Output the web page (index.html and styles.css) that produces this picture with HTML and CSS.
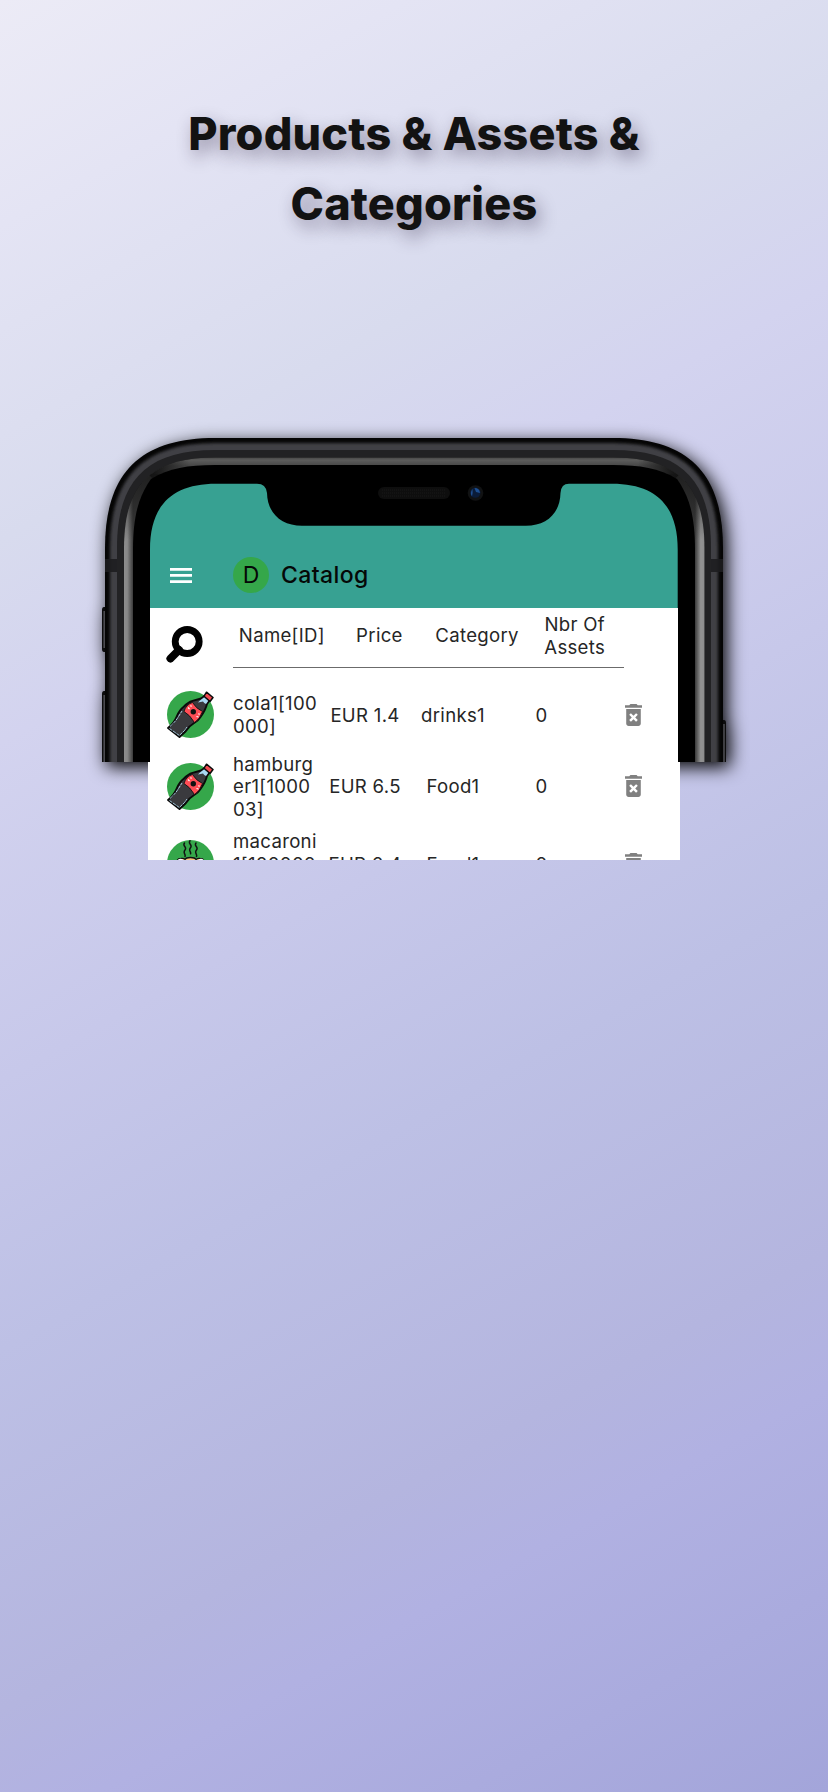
FILE: index.html
```html
<!DOCTYPE html>
<html lang="en">
<head>
<meta charset="utf-8">
<title>Products &amp; Assets &amp; Categories</title>
<link rel="stylesheet" href="styles.css">
</head>
<body>
<svg class="defs" width="0" height="0" aria-hidden="true">
  <symbol id="cola" viewBox="0 0 47 47" overflow="visible">
    <circle cx="23.5" cy="23.5" r="23.5" fill="#35a74a"/>
    <path d="M1 37Q7 32 9.700 25.500T17 15.500Q21 11 25.500 9.800T34 7.500L37.500 5L42.500 9.500L40 13Q38.500 19 33.500 26Q31 30 26.500 32.500T18.500 40.500L12.500 46Z" fill="#3a3a3e" stroke="#0a0a0a" stroke-width="1.900" stroke-linejoin="round"/>
    <path d="M33 9.500L37.500 6L41.500 9.500L39 13Q37 12 36 10.500L31 11.500Z" fill="#a9d9f3"/>
    <path d="M39.500 1.200L46 6.500L43 10.500L37 5.200Z" fill="#f2494f" stroke="#0a0a0a" stroke-width="1.500" stroke-linejoin="round"/>
    <path d="M17 20.500Q19 13.500 25.500 11.500Q29 17.500 35.500 20.500Q33 28 27.500 31.500Q23 24 17 20.500Z" fill="#ff4d55" stroke="#0a0a0a" stroke-width=".8"/>
    <circle cx="26.300" cy="20.800" r="2.700" fill="#111"/>
    <path d="M21 16.500l1.500 1.500M29.500 25.500l2 .5M23.500 14.500l1 1M31.500 22.500l1 1" stroke="#fff" stroke-width="1.100"/>
    <path d="M2.500 37.500L12.300 44.500L17.500 39.500L20 36M3 35.500Q9 30 11.500 25.500L15 20" fill="none" stroke="#b7dff5" stroke-width=".9" stroke-dasharray="3.500 .8"/>
  </symbol>
  <symbol id="pasta" viewBox="0 0 47 47">
    <circle cx="23.500" cy="23.500" r="23.500" fill="#35a74a"/>
    <path d="M17.500 3c-2.500 3 3 4 .5 7c-2.500 3 1 4 0 6.500M23 .8c-2.500 3 3 4 .5 7c-2.500 3 1 4 0 6M29 3c-2.500 3 3 4 .5 7c-2.500 3 1 4 0 6.500" fill="none" stroke="#111" stroke-width="1.500" stroke-linecap="round"/>
    <path d="M10 22q0-3.500 4-3.500q3-.5 4 1q1-2 5.500-2t5.500 2q2-1.500 4-1q4 0 4 3.500v8H10z" fill="#fbc57c" stroke="#111" stroke-width="1.300"/>
    <path d="M11.500 20.500q2-1.500 4 0M32 20.500q2-1.500 4 0" fill="none" stroke="#fff" stroke-width="1.800"/>
  </symbol>
  <symbol id="trash" viewBox="5 3 14 18">
    <path fill="#808080" fill-rule="evenodd" d="M6 19c0 1.100.9 2 2 2h8c1.100 0 2-.9 2-2V7H6v12zm2.460-7.120l1.410-1.410L12 12.590l2.120-2.120 1.410 1.410L13.410 14l2.120 2.120-1.410 1.410L12 15.410l-2.120 2.120-1.410-1.410L10.590 14l-2.130-2.120zM15.500 4l-1-1h-5l-1 1H5v2h14V4z"/>
  </symbol>
</svg>

<main class="page">
  <h1 class="headline">Products &amp; Assets &amp;<br>Categories</h1>

  <section class="phone">
    <svg class="frame" viewBox="80 410 670 400" width="670" height="400" aria-hidden="true">
      <defs>
        <clipPath id="cut"><rect x="80" y="410" width="670" height="352"/></clipPath>
        <filter id="soft" x="-5%" y="-5%" width="110%" height="110%"><feGaussianBlur stdDeviation="1.600"/></filter>
        <linearGradient id="topShine" x1="0" y1="457" x2="0" y2="466" gradientUnits="userSpaceOnUse">
          <stop offset="0" stop-color="#444"/><stop offset=".35" stop-color="#5c5c5b"/><stop offset="1" stop-color="#464646"/>
        </linearGradient>
        <linearGradient id="leftShine" x1="123.500" y1="0" x2="133" y2="0" gradientUnits="userSpaceOnUse">
          <stop offset="0" stop-color="#8d8d8d"/><stop offset=".4" stop-color="#888"/><stop offset="1" stop-color="#3a3a3a"/>
        </linearGradient>
        <linearGradient id="rightShine" x1="695" y1="0" x2="704.500" y2="0" gradientUnits="userSpaceOnUse">
          <stop offset="0" stop-color="#3a3a3a"/><stop offset=".6" stop-color="#929292"/><stop offset="1" stop-color="#8d8d8d"/>
        </linearGradient>
        <linearGradient id="fadeDown" x1="0" y1="476" x2="0" y2="540" gradientUnits="userSpaceOnUse">
          <stop offset="0" stop-color="#151515"/><stop offset="1" stop-color="#151515" stop-opacity="0"/>
        </linearGradient>
        <linearGradient id="fadeLeft" x1="150" y1="0" x2="190" y2="0" gradientUnits="userSpaceOnUse">
          <stop offset="0" stop-color="#111"/><stop offset="1" stop-color="#111" stop-opacity="0"/>
        </linearGradient>
        <linearGradient id="fadeRight" x1="638" y1="0" x2="678" y2="0" gradientUnits="userSpaceOnUse">
          <stop offset="0" stop-color="#111" stop-opacity="0"/><stop offset="1" stop-color="#111"/>
        </linearGradient>
        <clipPath id="body"><path d="M105 800V548C105 473 140 438 215 438H613C688 438 723 473 723 548V800Z"/></clipPath>
        <clipPath id="rim"><path d="M124 800V548C124 484.500 151 457.500 215 457.500H613C677 457.500 704.500 484.500 704.500 548V800Z"/></clipPath>
      </defs>
      <g class="shell">
      <g clip-path="url(#cut)">
        <path d="M107 607h-3q-2 0-2 3v39q0 3 2 3h3zM107 691h-3q-2 0-2 3v80h5zM721 720h3q2 0 2 3v50h-5z" fill="#0c0c0d"/>
        <path d="M104.200 611v37M104.200 695v80M724 724v50" stroke="#4b4b50" stroke-width="1.600"/>
        <path d="M105 800V548C105 473 140 438 215 438H613C688 438 723 473 723 548V800Z" fill="#050505"/>
        <g clip-path="url(#body)">
          <path d="M115 800V548C115 479 147 448 215 448H613C681 448 713 479 713 548V800" fill="none" stroke="#414145" stroke-width="10" filter="url(#soft)"/>
          <path d="M105 559h12v13h-12zM711 559h12v13h-12z" fill="#1d1d1f" opacity=".9"/>
        </g>
        <path d="M117 800V548C117 480 147 450 215 450H613C681 450 711 480 711 548V800Z" fill="#222224"/>
        <g clip-path="url(#rim)">
          <rect x="123" y="457" width="583" height="320" fill="#000"/>
          <rect x="140" y="457" width="548" height="24" fill="url(#topShine)"/>
          <rect x="140" y="457" width="50" height="30" fill="url(#fadeLeft)"/>
          <rect x="638" y="457" width="50" height="30" fill="url(#fadeRight)"/>
          <path d="M123 777V530Q124 493 149 475L165 490V777Z" fill="url(#leftShine)"/>
          <path d="M705 777V530Q704 493 679 475L663 490V777Z" fill="url(#rightShine)"/>
          <path d="M123 474h40v70h-40zM665 474h40v70h-40z" fill="url(#fadeDown)" opacity=".7"/>
          <path d="M133 777V550C133 515 139 496 151 479C169 468 188 465 215 465H613C640 465 659 468 677 479C689 496 695 515 695 550V777Z" fill="#000"/>
        </g>
      </g>
      </g>
      <path d="M150 608V549.500C150 505.500 172 483.700 216 483.700H257Q266 483.700 267 493C267.500 514 282 525.700 302 525.700H526C546 525.700 560 514 560.500 493Q561 483.700 569 483.700H612C656 483.700 677.700 505.500 677.700 549.500V608Z" fill="#37a192"/>
      <rect x="378" y="487" width="72" height="12" rx="6" fill="#0e0e0e"/>
      <path d="M382 490h64M382 493h64M382 496h64" stroke="#181818" stroke-width="1" stroke-dasharray="1 1"/>
      <circle cx="475.500" cy="493" r="7.800" fill="#111213"/>
      <circle cx="475.300" cy="492.600" r="5.200" fill="#0b1c39"/>
      <path d="M474.500 488q5 0 5.500 5l-4-1z" fill="#1d4f92"/>
      <path d="M472.500 489q-3 4-.5 7.500q1-4 .5-7.500z" fill="#1f4f90"/>
    </svg>

    <header class="appbar">
      <svg class="menu" viewBox="0 0 22 15" width="22" height="15"><path d="M0 0h22v2.700H0zM0 6.100h22v2.700H0zM0 12.300h22V15H0z" fill="#fff"/></svg>
      <span class="avatar">D</span>
      <span class="title">Catalog</span>
    </header>

    <div class="catalog">
      <div class="head">
        <svg class="search" viewBox="0 0 37 37" width="37" height="37"><circle cx="21.200" cy="15.500" r="12" fill="none" stroke="#000" stroke-width="6.800"/><path d="M13 24L4.500 32.500" stroke="#000" stroke-width="8" stroke-linecap="round"/></svg>
        <div class="columns">
          <span>Name[ID]</span><span>Price</span><span>Category</span><span>Nbr Of<br>Assets</span>
        </div>
      </div>
      <div class="row short">
        <svg class="pic"><use href="#cola"/></svg>
        <span class="name">cola1[100<br>000]</span><span>EUR 1.4</span><span>drinks1</span><span>0</span>
        <svg class="bin"><use href="#trash"/></svg>
      </div>
      <div class="row">
        <svg class="pic"><use href="#cola"/></svg>
        <span class="name">hamburg<br>er1[1000<br>03]</span><span>EUR 6.5</span><span>Food1</span><span>0</span>
        <svg class="bin"><use href="#trash"/></svg>
      </div>
      <div class="row">
        <svg class="pic"><use href="#pasta"/></svg>
        <span class="name">macaroni<br>1[100002<br>]</span><span>EUR 2.4</span><span>Food1</span><span>0</span>
        <svg class="bin"><use href="#trash"/></svg>
      </div>
    </div>
  </section>
</main>
</body>
</html>
```

FILE: styles.css
```css
* { box-sizing: border-box; }

body {
  margin: 0;
  font-family: Inter, "Liberation Sans", sans-serif;
}

.defs { position: absolute; }

.page {
  height: 1792px;
  overflow: hidden;
  background: linear-gradient(151deg, #ecebf6 0%, #e4e4f4 10%, #d8dbee 24%, #d3d3ef 33%, #c7c8ea 48%, #bdc0e5 60%, #b4b5df 76%, #b1b1e2 82%, #a3a5da 100%);
}

.headline {
  margin: 0;
  padding-top: 99px;
  height: 438px;
  font-weight: 800;
  font-size: 45px;
  line-height: 70px;
  letter-spacing: .2px;
  text-align: center;
  color: #121212;
  text-shadow: 4px 7px 17px rgba(30, 20, 50, .42);
}

.phone {
  position: relative;
  width: 532px;
  margin-left: 148px;
}

/* Device illustration sits behind the app content */
.frame {
  position: absolute;
  left: -68px;
  top: -28px;
}

.shell { filter: drop-shadow(4px 5px 9px rgba(0, 0, 0, 1)); }

.appbar {
  position: relative;
  display: flex;
  align-items: center;
  height: 170px;
  padding: 104px 0 0 22px;
  color: #050807;
  font-size: 23px;
}

.avatar {
  width: 36px;
  height: 36px;
  margin-left: 41px;
  border-radius: 50%;
  background: #35a74a;
  line-height: 36px;
  text-align: center;
}

.title {
  margin-left: 12px;
  font-weight: 500;
  letter-spacing: .4px;
}

.catalog {
  position: relative;
  height: 252px;
  overflow: hidden;
  background: linear-gradient(#fff, #fff) 0 154px / 532px 98px no-repeat, linear-gradient(#fff, #fff) 2px 0 / 528px 154px no-repeat;
  color: #262626;
  font-size: 18.600px;
  line-height: 22.500px;
  letter-spacing: .3px;
}

.head {
  display: flex;
  height: 74px;
}

.search { margin: 18px 0 0 18px; }

.columns {
  display: grid;
  grid-template-columns: repeat(4, 1fr);
  align-items: center;
  width: 390.500px;
  height: 60px;
  margin-left: 30px;
  padding-bottom: 4px;
  text-align: center;
  border-bottom: 1px solid #6b6b6b;
}

.row {
  display: grid;
  grid-template-columns: 66px 88px 88px 88px 128px 18px;
  align-items: center;
  height: 77.500px;
  padding-left: 19px;
  text-align: center;
}

.row.short { height: 65.500px; }

.row > span:nth-of-type(4) { padding-right: 39px; }

.name { text-align: left; }

.pic { width: 47px; height: 47px; }

.bin { width: 17px; height: 22px; }
```
